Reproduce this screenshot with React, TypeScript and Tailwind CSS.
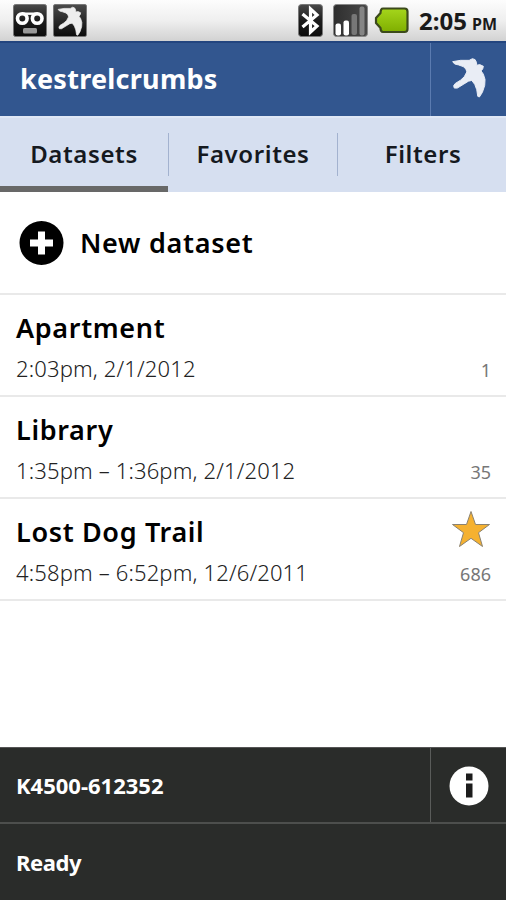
type Dataset = {
  name: string;
  time: string;
  count: number;
  starred?: boolean;
};

const datasets: Dataset[] = [
  { name: "Apartment", time: "2:03pm, 2/1/2012", count: 1 },
  { name: "Library", time: "1:35pm – 1:36pm, 2/1/2012", count: 35 },
  { name: "Lost Dog Trail", time: "4:58pm – 6:52pm, 12/6/2011", count: 686, starred: true },
];

function Bird({ className }: { className: string }) {
  return (
    <svg viewBox="96 56 106 124" className={className} fill="currentColor">
      <path d="M98 70 L122 66 L148 66 L158 61 L166 64 L170 72 L171 81 L180 79 L191 84 L189 92 L184 98 L191 108 L196 124 L195 142 L188 163 L179 177 L174 175 L171 155 L165 139 L156 127 L146 129 L130 139 L112 150 L103 150 L101 143 L106 136 L122 126 L133 116 L141 101 L138 92 L130 85 L116 80 L104 77 Z" strokeWidth="3" stroke="currentColor" strokeLinejoin="round" />
    </svg>
  );
}

function StatusBar() {
  return (
    <div className="flex h-[41px] items-start bg-linear-to-b from-[#fdfdfd] via-[#efefef] to-[#d2d2d2] pt-[4px] pl-[13px] pr-[9px]">
      <svg width="34" height="33" viewBox="0 0 34 33">
        <defs>
          <linearGradient id="tile" x1="0" y1="0" x2="0" y2="1">
            <stop offset="0" stopColor="#4a4a4a" />
            <stop offset="0.5" stopColor="#1c1c1c" />
            <stop offset="1" stopColor="#0c0c0c" />
          </linearGradient>
        </defs>
        <rect x="0.5" y="0.5" width="33" height="32" rx="2" fill="url(#tile)" stroke="#777" />
        <g fill="none" stroke="#fff" strokeWidth="3.6">
          <circle cx="9.3" cy="14.5" r="4.8" />
          <circle cx="24.2" cy="14.5" r="4.8" />
          <path d="M9 9.700h15" strokeWidth="2.4" />
        </g>
        <rect x="10" y="24" width="14" height="5.5" rx="1.5" fill="#999" />
      </svg>
      <div className="ml-[6px] flex h-[33px] w-[34px] items-center justify-center rounded-[2px] border border-[#777] bg-linear-to-b from-[#4a4a4a] to-[#0c0c0c] text-[#eee]">
        <Bird className="h-[30px] w-[27px]" />
      </div>
      <svg className="ml-auto" width="25" height="33" viewBox="0 0 25 33">
        <rect x="0.5" y="0.5" width="24" height="32" rx="3" fill="url(#tile)" stroke="#777" />
        <path d="M4.500 10l14.500 12L12.500 28V5L19 11 4.500 23" fill="none" stroke="#fff" strokeWidth="3.2" />
      </svg>
      <svg className="ml-[10px]" width="35" height="33" viewBox="0 0 35 33">
        <defs>
          <linearGradient id="signal" x1="0" y1="0" x2="1" y2="0">
            <stop offset="0" stopColor="#2e2e2e" />
            <stop offset="1" stopColor="#4a4a4a" />
          </linearGradient>
        </defs>
        <rect x="0.5" y="0.5" width="34" height="32" rx="3" fill="url(#signal)" stroke="#888" />
        <rect x="2.5" y="19.5" width="5.5" height="12" rx="2" fill="#fff" />
        <rect x="10.5" y="16.5" width="5.5" height="15" rx="2" fill="#fff" />
        <rect x="18.5" y="10" width="5.5" height="21" rx="2" fill="#777" />
        <rect x="26.5" y="2.5" width="5" height="29" rx="2" fill="#858585" />
      </svg>
      <svg className="mt-[3px] ml-[6px]" width="35" height="27" viewBox="0 0 35 27">
        <defs>
          <linearGradient id="cell" x1="0" y1="0" x2="0" y2="1">
            <stop offset="0" stopColor="#a5d61c" />
            <stop offset="1" stopColor="#7fae00" />
          </linearGradient>
        </defs>
        <path d="M9 1.500H30.500Q33.500 1.500 33.500 4.500V22Q33.500 25 30.500 25H9Q6.500 25 6.500 21L2 16V11L6.500 6Q6.500 1.500 9 1.500Z" fill="url(#cell)" stroke="#3c4a1c" strokeWidth="2.2" strokeLinejoin="round" />
      </svg>
      <div className="ml-[10px] flex w-[78px] items-baseline justify-between whitespace-nowrap font-bold text-[#1a1a1a]">
        <span className="text-[24px] leading-[33px]">2:05</span>
        <span className="text-[16px] leading-[33px]">PM</span>
      </div>
    </div>
  );
}

function Header() {
  return (
    <div className="flex h-[75px] border-t-2 border-[#23457f] bg-[#32568f]">
      <h1 className="flex-1 pt-[17px] pl-[20px] text-[27px] leading-[38px] font-bold tracking-[0.25px] text-white">
        kestrelcrumbs
      </h1>
      <div className="w-[76px] border-l border-[#5b7bb0] pt-[14px] pl-[21px] text-[#e9edf5]">
        <Bird className="h-[41px] w-[35px]" />
      </div>
    </div>
  );
}

function Tabs() {
  return (
    <div className="flex h-[76px] border-t-2 border-[#dfe7f5] bg-[#d6dff0] text-[24px] leading-[36px] font-semibold tracking-[0.6px] text-[#15191f]">
      <div className="w-[168px] border-b-[6px] border-[#686868] pt-[18px] text-center">Datasets</div>
      <div className="mt-[15px] h-[43px] w-[170px] border-x border-[#a3b2cf] pt-[3px] text-center">Favorites</div>
      <div className="flex-1 pt-[18px] pl-[2px] text-center">Filters</div>
    </div>
  );
}

function Star() {
  return (
    <svg width="40" height="38" viewBox="0 0 40 38">
      <path
        d="M20 1.500L24.500 14.500H38.500L27.500 22.700L31.500 36.500L20 28.300L8.500 36.500L12.500 22.700L1.500 14.500H15.500Z"
        fill="#f5b130"
        stroke="#8b8270"
        strokeWidth="1"
      />
    </svg>
  );
}

function DatasetRow({ name, time, count, starred }: Dataset) {
  return (
    <div className="flex h-[102px] justify-between border-b-2 border-[#e9e9e9] pr-[15px] pl-[16px] text-black">
      <div className="whitespace-nowrap">
        <div className="pt-[13px] text-[27px] leading-[40px] font-semibold tracking-[0.65px]">{name}</div>
        <div className="pt-[4px] text-[22px] leading-[32px] font-light tracking-[0.15px] text-[#222]">{time}</div>
      </div>
      <div className="flex flex-col items-end pt-[11px]">
        <div className="h-[38px]">{starred && <Star />}</div>
        <div className="pt-[11px] text-[18px] leading-[30px] text-[#777]">{count}</div>
      </div>
    </div>
  );
}

function Footer() {
  return (
    <div className="mt-auto h-[153px] border-t border-[#555] bg-[#2a2c2a] text-[22px] leading-[32px] font-bold text-white">
      <div className="flex h-[76px] border-b-2 border-[#4d4f4d]">
        <div className="flex-1 pt-[21px] pl-[16px]">K4500-612352</div>
        <div className="w-[76px] border-l border-[#5a5c5a] pt-[17px] pl-[17px]">
          <svg width="42" height="42" viewBox="0 0 42 42">
            <circle cx="21" cy="21" r="19.5" fill="#fff" />
            <rect x="18" y="8.5" width="6.5" height="7" fill="#1c1c1c" />
            <rect x="18" y="18.5" width="6.5" height="14" fill="#1c1c1c" />
          </svg>
        </div>
      </div>
      <div className="pt-[22px] pl-[16px] tracking-[-0.4px]">Ready</div>
    </div>
  );
}

export default function App() {
  return (
    <div className="flex h-[900px] w-[506px] flex-col overflow-hidden bg-white font-['Noto_Sans',sans-serif]">
      <StatusBar />
      <Header />
      <Tabs />
      <div className="flex h-[103px] items-center border-b-2 border-[#e9e9e9] pl-[19px] text-black">
        <svg width="46" height="46" viewBox="0 0 46 46">
          <circle cx="22.5" cy="23" r="22" />
          <path d="M22.500 11.500v23M11 23h23" stroke="#fff" strokeWidth="7" />
        </svg>
        <span className="pt-[2px] pl-[15px] text-[27px] font-semibold tracking-[0.7px]">New dataset</span>
      </div>
      {datasets.map((d) => (
        <DatasetRow key={d.name} {...d} />
      ))}
      <Footer />
    </div>
  );
}
